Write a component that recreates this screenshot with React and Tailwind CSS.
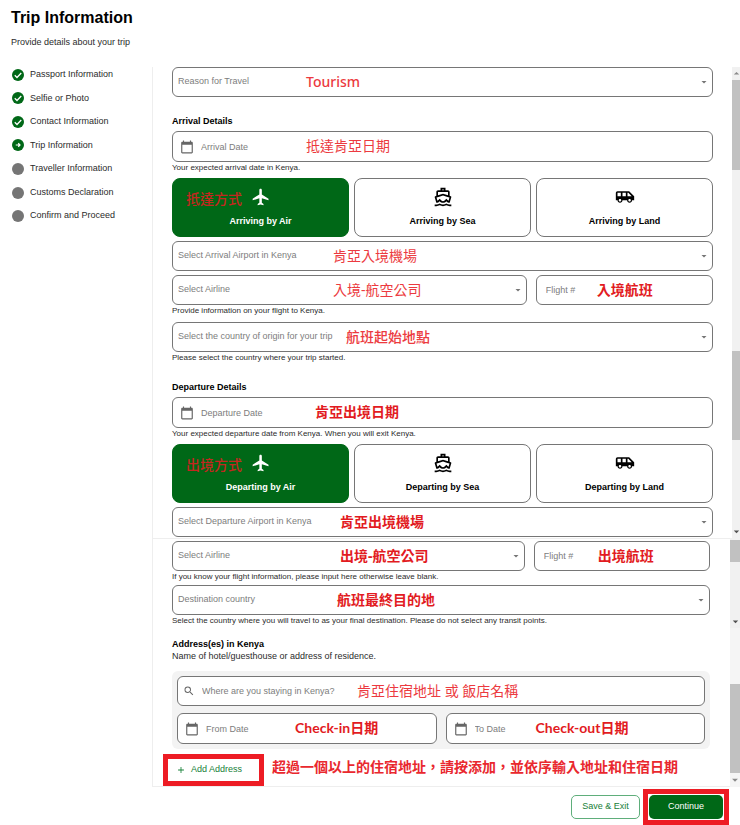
import React from "react";
import {
  MdAdd,
  MdAirportShuttle,
  MdArrowDropDown,
  MdArrowDropUp,
  MdCalendarToday,
  MdFlight,
  MdOutlineDirectionsBoat,
  MdSearch,
} from "react-icons/md";
import clsx from "clsx";

const steps = [
  { label: "Passport Information", status: "done" },
  { label: "Selfie or Photo", status: "done" },
  { label: "Contact Information", status: "done" },
  { label: "Trip Information", status: "current" },
  { label: "Traveller Information", status: "todo" },
  { label: "Customs Declaration", status: "todo" },
  { label: "Confirm and Proceed", status: "todo" },
];

const box = "w-full rounded-[6px] border border-[#767676] bg-white text-[9px] outline-none";

function StepIcon({ status }) {
  return (
    <svg viewBox="0 0 24 24" className="h-3 w-3 shrink-0" fill="none" stroke="white">
      <circle cx="12" cy="12" r="12" stroke="none" fill={status === "todo" ? "#757575" : "#006817"} />
      {status === "done" && <path d="M5.5 12.5l4.5 4.5 8.5-9" strokeWidth="2.6" />}
      {status === "current" && <path d="M7.5 12h8M12.5 8.5l3.5 3.5-3.5 3.5" strokeWidth="2.4" />}
    </svg>
  );
}

// Red hint laid over a control
function Note({ children, className, font = "font-['Noto_Sans','Noto_Sans_CJK_TC',sans-serif]" }) {
  return (
    <span className={clsx("pointer-events-none absolute whitespace-nowrap text-[14px] leading-5", font, className)}>
      {children}
    </span>
  );
}

function SelectField({ label, note, noteClass }) {
  return (
    <div className="relative">
      <select aria-label={label} defaultValue="" className={clsx(box, "h-[30px] appearance-none pl-[5px] pr-5 text-[#7d7d7d]")}>
        <option value="">{label}</option>
      </select>
      <MdArrowDropDown className="pointer-events-none absolute right-[3px] top-[9px] h-3 w-3 text-[#757575]" />
      <Note className={clsx("top-[5px]", noteClass)}>{note}</Note>
    </div>
  );
}

function TextField({ label, icon, note, noteClass, noteFont, className }) {
  return (
    <div className="relative">
      <input type="text" aria-label={label} placeholder={label} className={clsx(box, "block placeholder:text-[#7d7d7d]", className)} />
      {icon}
      <Note className={clsx("top-[5px]", noteClass)} font={noteFont}>
        {note}
      </Note>
    </div>
  );
}

function DateField(props) {
  return (
    <TextField
      className="h-[31px] pl-7"
      icon={<MdCalendarToday className="pointer-events-none absolute left-2 top-[9px] h-[14px] w-[14px] text-[#666]" />}
      {...props}
    />
  );
}

function Helper({ children }) {
  return <p className="mt-px text-[8px] leading-[10px] text-[#2b2b2b]">{children}</p>;
}

function TransportCards({ verb, note }) {
  const card = "flex h-[59px] flex-col items-center justify-between rounded-[8px] border pb-[9px] pt-2 text-[9px] font-bold leading-3";
  return (
    <div className="relative grid grid-cols-3 gap-[5px]">
      <button type="button" className={clsx(card, "border-[#006817] bg-[#006817] text-white")}>
        <MdFlight className="h-5 w-5" />
        {verb} by Air
      </button>
      <button type="button" className={clsx(card, "border-[#767676] bg-white text-black")}>
        <MdOutlineDirectionsBoat className="h-5 w-5" />
        {verb} by Sea
      </button>
      <button type="button" className={clsx(card, "border-[#767676] bg-white text-black")}>
        <MdAirportShuttle className="h-5 w-5" />
        {verb} by Land
      </button>
      <Note className="left-[14px] top-[11px] font-medium text-[#c4271f]">{note}</Note>
    </div>
  );
}

function Pane({ children, className, scroll }) {
  return (
    <section className="flex">
      <div className={clsx("min-w-0 flex-1", className)}>{children}</div>
      {scroll}
    </section>
  );
}

export default function App() {
  return (
    <div className="bg-white font-['Liberation_Sans',Arial,sans-serif] text-[9px] text-[#2b2b2b]">
      <header className="h-[67px] px-[11px] pt-2">
        <h1 className="text-[16px] font-bold leading-5 text-black">Trip Information</h1>
        <p className="mt-2 leading-3">Provide details about your trip</p>
      </header>

      <div className="flex">
        <nav className="w-[152px] shrink-0 pl-3">
          <ol className="-mt-1 grid h-[165px] auto-rows-fr items-center">
            {steps.map((step) => (
              <li key={step.label} className="flex items-center gap-[6px]">
                <StepIcon status={step.status} />
                {step.label}
              </li>
            ))}
          </ol>
        </nav>

        <main className="min-w-0 flex-1">
          {/* Arrival and departure */}
          <Pane
            className="border-l border-[#eeeeee] pb-px pl-[19px] pr-[19px]"
            scroll={
              <div className="flex w-2 flex-col items-center overflow-hidden bg-[#f1f1f1]">
                <MdArrowDropUp className="h-[13px] w-[13px] shrink-0 text-[#8a8a8a]" />
                <div className="h-[90px] w-full shrink-0 bg-[#c1c1c1]" />
                <div className="h-[181px] shrink-0" />
                <div className="h-[89px] w-full shrink-0 bg-[#c1c1c1]" />
                <MdArrowDropDown className="mt-auto h-[13px] w-[13px] shrink-0 text-[#505050]" />
              </div>
            }
          >
            <SelectField label="Reason for Travel" note="Tourism" noteClass="left-[134px] font-medium text-[#ec3a40]" />

            <h2 className="mt-[18px] font-bold leading-3 text-black">Arrival Details</h2>
            <div className="mt-1">
              <DateField label="Arrival Date" note="抵達肯亞日期" noteClass="left-[134px] text-[#ec3a40]" />
            </div>
            <div className="pb-[5px]">
              <Helper>Your expected arrival date in Kenya.</Helper>
            </div>
            <div className="flex flex-col gap-1">
              <TransportCards verb="Arriving" note="抵達方式" />
              <SelectField label="Select Arrival Airport in Kenya" note="肯亞入境機場" noteClass="left-[161px] text-[#ec3a40]" />
              <div className="grid grid-cols-[2fr_1fr] gap-[9px]">
                <SelectField label="Select Airline" note="入境-航空公司" noteClass="left-[161px] text-[#ec3a40]" />
                <TextField label="Flight #" className="h-[30px] pl-[9px]" note="入境航班" noteClass="left-[61px] font-bold text-[#e21b22]" />
              </div>
            </div>
            <Helper>Provide information on your flight to Kenya.</Helper>

            <div className="mt-[6px]">
              <SelectField
                label="Select the country of origin for your trip"
                note="航班起始地點"
                noteClass="left-[174px] font-medium text-[#ec3a40]"
              />
            </div>
            <Helper>Please select the country where your trip started.</Helper>

            <h2 className="mt-[18px] font-bold leading-3 text-black">Departure Details</h2>
            <div className="mt-1">
              <DateField label="Departure Date" note="肯亞出境日期" noteClass="left-[143px] font-bold text-[#e21b22]" />
            </div>
            <div className="pb-[5px]">
              <Helper>Your expected departure date from Kenya. When you will exit Kenya.</Helper>
            </div>
            <div className="flex flex-col gap-1">
              <TransportCards verb="Departing" note="出境方式" />
              <SelectField label="Select Departure Airport in Kenya" note="肯亞出境機場" noteClass="left-[168px] font-bold text-[#e21b22]" />
            </div>
          </Pane>

          {/* Flight out */}
          <Pane
            className="border-l border-t border-[#eeeeee] pb-[2px] pl-[19px] pr-5 pt-[2px]"
            scroll={
              <div className="flex w-[10px] flex-col items-center overflow-hidden bg-[#f1f1f1]">
                <div className="mt-[2px] h-[22px] w-full bg-[#c1c1c1]" />
                <MdArrowDropDown className="mt-auto h-[13px] w-[13px] shrink-0 text-[#505050]" />
              </div>
            }
          >
            <div className="grid grid-cols-[2fr_1fr] gap-[9px]">
              <SelectField label="Select Airline" note="出境-航空公司" noteClass="left-[168px] font-bold text-[#e21b22]" />
              <TextField label="Flight #" className="h-[30px] pl-[9px]" note="出境航班" noteClass="left-[64px] font-bold text-[#e21b22]" />
            </div>
            <div className="pb-[3px]">
              <Helper>If you know your flight information, please input here otherwise leave blank.</Helper>
            </div>
            <SelectField label="Destination country" note="航班最終目的地" noteClass="left-[165px] font-bold text-[#e21b22]" />
            <Helper>Select the country where you will travel to as your final destination. Please do not select any transit points.</Helper>
          </Pane>

          {/* Addresses */}
          <Pane
            className="border-b border-l border-[#eeeeee] pl-[19px] pr-5"
            scroll={
              <div className="flex w-[10px] flex-col items-center bg-[#f5f5f5]">
                <div className="mt-auto h-[89px] w-full bg-[#c1c1c1]" />
                <MdArrowDropDown className="h-[14px] w-[14px] shrink-0 text-[#8a8a8a]" />
              </div>
            }
          >
            <h2 className="pt-[10px] font-bold leading-3 text-black">Address(es) in Kenya</h2>
            <p className="leading-3">Name of hotel/guesthouse or address of residence.</p>
            <div className="mt-[9px] flex flex-col gap-[7px] rounded-[6px] bg-[#f3f3f3] p-[5px]">
              <TextField
                label="Where are you staying in Kenya?"
                className="h-[30px] pl-6"
                icon={<MdSearch className="pointer-events-none absolute left-[6px] top-[9px] h-3 w-3 text-[#666]" />}
                note="肯亞住宿地址 或 飯店名稱"
                noteClass="left-[180px] text-[#ec3a40]"
              />
              <div className="grid grid-cols-2 gap-[9px]">
                <DateField
                  label="From Date"
                  note="Check-in日期"
                  noteFont="font-['Lato','Noto_Sans_CJK_TC',sans-serif]"
                  noteClass="left-[118px] font-bold text-[#e21b22]"
                />
                <DateField
                  label="To Date"
                  note="Check-out日期"
                  noteFont="font-['Lato','Noto_Sans_CJK_TC',sans-serif]"
                  noteClass="left-[90px] font-bold text-[#e21b22]"
                />
              </div>
            </div>
            <div className="-ml-[9px] mt-[5px] flex items-start gap-2">
              <button
                type="button"
                className="flex h-8 w-[101px] shrink-0 items-center gap-[5px] border-[5px] border-[#ed1c24] pl-2 text-[#178038]"
              >
                <MdAdd className="h-[10px] w-[10px]" />
                Add Address
              </button>
              <p className="whitespace-nowrap font-['Noto_Sans_CJK_TC',sans-serif] text-[14px] font-bold leading-6 text-[#e9282e]">
                超過一個以上的住宿地址，請按添加，並依序輸入地址和住宿日期
              </p>
            </div>
          </Pane>
        </main>
      </div>

      <footer className="flex items-center justify-end gap-[3px] pr-[11px] pt-[2px]">
        <button type="button" className="h-6 w-[69px] rounded-[5px] border border-[#5fae7b] text-[#178038]">
          Save &amp; Exit
        </button>
        <div className="border-[5px] border-[#ed1c24] p-px">
          <button type="button" className="block h-6 w-[74px] rounded-[5px] bg-[#006817] font-medium text-white">
            Continue
          </button>
        </div>
      </footer>
    </div>
  );
}
